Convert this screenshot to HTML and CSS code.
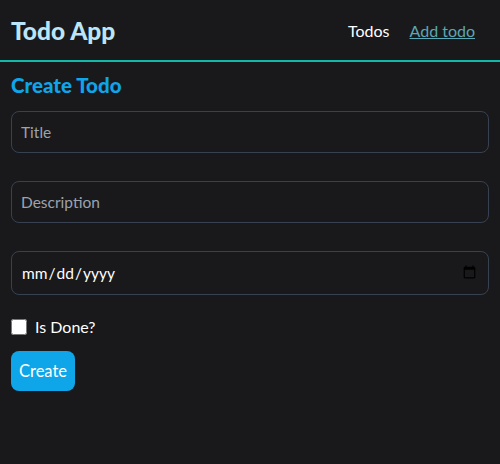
FILE: index.html
```html
<!DOCTYPE html>
<html lang="en">
<head>
<meta charset="utf-8">
<title>Todo App</title>
<link rel="stylesheet" href="styles.css">
</head>
<body>
<header class="topbar">
  <h1 class="brand">Todo App</h1>
  <nav class="nav">
    <a class="nav-link" href="#">Todos</a>
    <a class="nav-link nav-link-active" href="#">Add todo</a>
  </nav>
</header>
<main class="content">
  <h2 class="section-title">Create Todo</h2>
  <form class="todo-form">
    <input class="field" type="text" placeholder="Title">
    <input class="field" type="text" placeholder="Description">
    <input class="field field-date" type="date">
    <label class="check-row"><input class="check" type="checkbox"> <span>Is Done?</span></label>
    <div class="actions"><button class="btn" type="button">Create</button></div>
  </form>
</main>
</body>
</html>
```

FILE: styles.css
```css
* { box-sizing: border-box; }
html, body { margin: 0; height: 100%; }
body {
  background: #19191c;
  color: #ffffff;
  font-family: Lato, "Noto Sans", sans-serif;
}
.topbar {
  display: flex;
  align-items: center;
  justify-content: space-between;
  height: 62px;
  padding: 0 25px 0 11px;
  border-bottom: 2px solid #14b8a6;
}
.brand {
  margin: 0;
  font-size: 24.5px;
  font-weight: 900;
  color: #bae6fd;
}
.nav { display: flex; gap: 20px; font-size: 16px; }
.nav-link { color: #ffffff; text-decoration: none; }
.nav-link-active { color: #5ba8b4; text-decoration: underline; }
.content { padding: 11px 11px; }
.section-title {
  margin: 0 0 14px;
  font-size: 20.5px;
  font-weight: 900;
  color: #0ea5e9;
}
.todo-form { display: flex; flex-direction: column; }
.field {
  height: 42px;
  margin-bottom: 28px;
  padding: 0 9px;
  border: 1px solid #374151;
  border-radius: 8px;
  background: transparent;
  color: #ffffff;
  font-family: inherit;
  font-size: 15.5px;
}
.field::placeholder { color: #9ca3af; }
.field-date { height: 44px; margin-bottom: 22px; }
.check-row { display: flex; align-items: center; gap: 8px; font-size: 16px; }
.check { margin: 0; width: 16px; height: 16px; }
.actions { margin-top: 15px; }
.btn {
  padding: 0 8px;
  height: 40px;
  border: 0;
  border-radius: 8px;
  background: #0ea5e9;
  color: #ffffff;
  font-family: inherit;
  font-size: 16.5px;
}
```
